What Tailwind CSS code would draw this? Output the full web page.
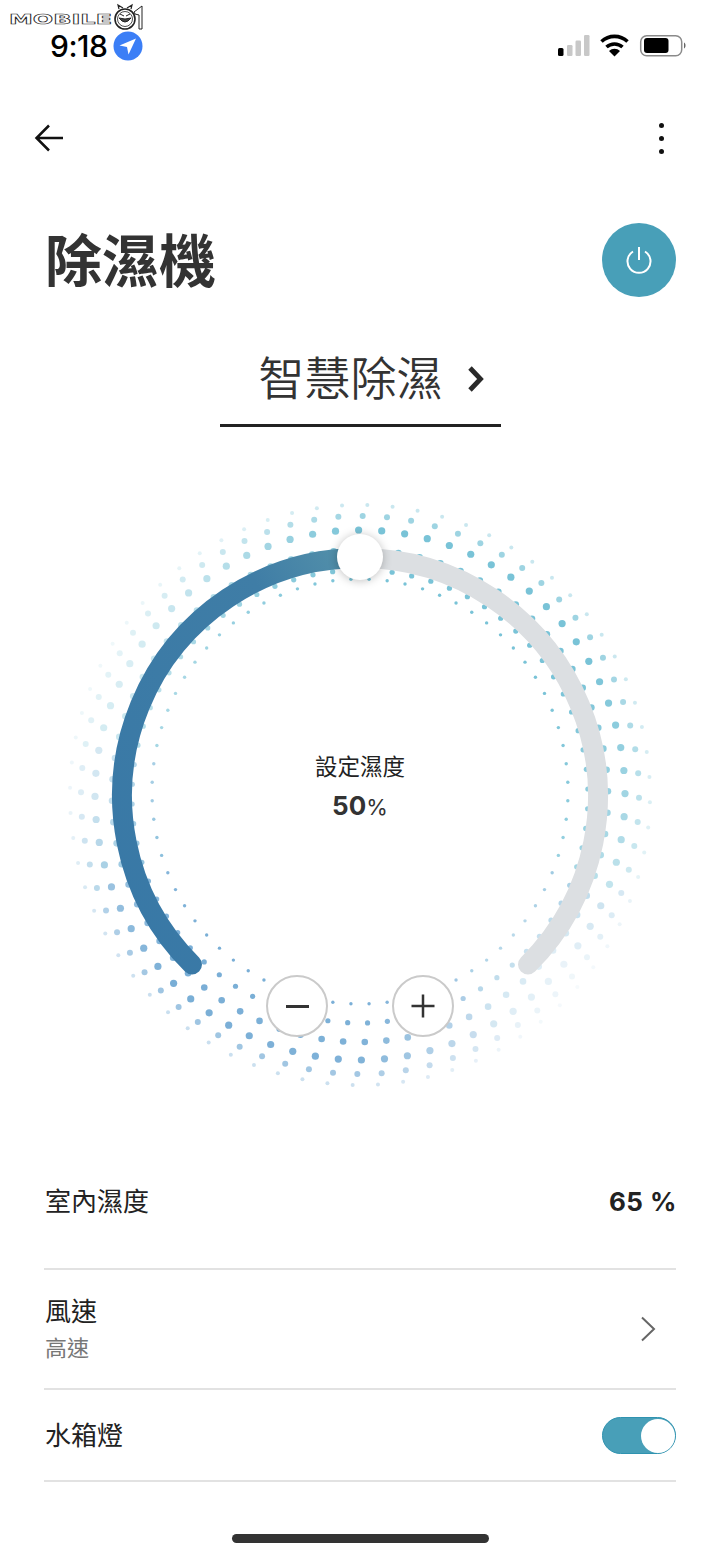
<!DOCTYPE html>
<html lang="zh-Hant">
<head>
  <meta charset="UTF-8">
  <meta name="viewport" content="width=device-width, initial-scale=1.0">
  <title>除濕機</title>
  <script src="https://cdn.jsdelivr.net/npm/@tailwindcss/browser@4"></script>
</head>
<body class="bg-white font-['Inter','Noto_Sans_CJK_TC',sans-serif]">
  <div class="relative w-[720px] h-[1558px] overflow-hidden bg-white text-[#333]">

    <!-- watermark -->
    <svg class="absolute left-0 top-0" width="150" height="34" viewBox="0 0 150 34">
      <text x="9" y="23.500" font-family="DejaVu Sans" font-weight="700" font-size="14" textLength="103" lengthAdjust="spacingAndGlyphs" fill="#fff" stroke="#222" stroke-width="0.6">MOBILE</text>
      <circle cx="125" cy="19" r="10" fill="#fff" stroke="#222" stroke-width="1.6"/>
      <circle cx="125" cy="19" r="7.500" fill="none" stroke="#222" stroke-width="0.8"/>
      <path d="M119 18q6 8 12 0q-6 2-12 0zM120 14l4 2M130 14l-4 2" fill="#444" stroke="#222" stroke-width="1"/>
      <path d="M119 9l-1-4 5 3M131 9l1-4-5 3" fill="none" stroke="#222" stroke-width="1.2"/>
      <path d="M134 12l4-3 4-3v23h-3v-14l-4-1z" fill="#fff" stroke="#222" stroke-width="1"/>
    </svg>

    <!-- status bar -->
    <div class="h-[92px] pl-[50px] pr-[34px] flex items-center">
      <span class="text-[30px] leading-none font-medium text-black tracking-[-0.5px]">9:18</span>
      <svg class="ml-[6px]" width="30" height="30" viewBox="0 0 30 30">
        <circle cx="15" cy="15" r="14.500" fill="#3b7ef6"/>
        <path d="M23 7.500 6.500 14.500 14 16 15.500 23.500z" fill="#fff"/>
      </svg>
      <svg class="ml-auto" width="132" height="30" viewBox="554 31 132 30">
        <rect x="558" y="48" width="5.500" height="8" rx="1.500" fill="#000"/>
        <rect x="567" y="45" width="5.500" height="11" rx="1.200" fill="#c8c8c8"/>
        <rect x="575.500" y="40.500" width="5.500" height="15.500" rx="1.200" fill="#c8c8c8"/>
        <rect x="584" y="35" width="5.500" height="21" rx="1.200" fill="#c8c8c8"/>
        <path d="M601.500 41.500a19 19 0 0 1 26 0" fill="none" stroke="#000" stroke-width="3.600"/>
        <path d="M606.500 47a12 12 0 0 1 16 0" fill="none" stroke="#000" stroke-width="3.600"/>
        <path d="M609 51a8 8 0 0 1 11 0l-5.500 5.500z" fill="#000"/>
        <rect x="640.700" y="35.700" width="41" height="20" rx="6" fill="none" stroke="#8a8a8a" stroke-width="1.500"/>
        <rect x="644" y="38" width="24.500" height="15" rx="3" fill="#000"/>
        <path d="M684 42.500c2 1 2 5 0 6z" fill="#666"/>
      </svg>
    </div>

    <!-- nav -->
    <div class="h-[92px] pl-[34px] pr-[56px] flex items-center justify-between">
      <svg width="30" height="28" viewBox="0 0 30 28" fill="none" stroke="#111" stroke-width="2.500">
        <path d="M29 14H3M15 1.500 2.500 14 15 26.500"/>
      </svg>
      <div class="flex flex-col gap-[8px]">
        <span class="block w-[5px] h-[5px] rounded-full bg-[#111]"></span>
        <span class="block w-[5px] h-[5px] rounded-full bg-[#111]"></span>
        <span class="block w-[5px] h-[5px] rounded-full bg-[#111]"></span>
      </div>
    </div>

    <!-- title -->
    <div class="h-[152px] pl-[45px] pr-[44px] flex items-center justify-between">
      <h1 class="text-[57px] leading-none font-bold text-[#333] pt-[2px]">除濕機</h1>
      <button class="w-[74px] h-[74px] rounded-full bg-[#489fb8] flex items-center justify-center">
        <svg width="28" height="30" viewBox="0 0 28 30" fill="none" stroke="#fff" stroke-width="2">
          <path d="M14 2v13M8 6.500a11.500 11.500 0 1 0 12 0"/>
        </svg>
      </button>
    </div>

    <!-- mode tab -->
    <div class="w-[281px] h-[91px] mx-auto border-b-[3px] border-[#222] flex items-center pl-[39px] pb-[4px]">
      <span class="text-[46px] leading-none font-[350] text-[#333]">智慧除濕</span>
      <svg class="ml-[23px] mt-[1px]" width="20" height="28" viewBox="0 0 20 28" fill="none" stroke="#2a2a2a" stroke-width="4.800">
        <path d="M4 3 14.500 14 4 25"/>
      </svg>
    </div>

    <!-- dial -->
    <div class="relative h-[708px]">
      <svg id="dial" class="absolute inset-0" width="720" height="708" viewBox="0 427 720 708">
        <defs>
          <linearGradient id="arcFill" x1="0" y1="1" x2="1" y2="0">
            <stop offset="0" stop-color="#3878a6"/>
            <stop offset="0.75" stop-color="#3f7da6"/>
            <stop offset="1" stop-color="#5592aa"/>
          </linearGradient>
        </defs>
        <g id="dots"></g>
        <path d="M360 558A238 238 0 0 1 528 964.500" fill="none" stroke="#dcdfe2" stroke-width="20" stroke-linecap="round"/>
        <path d="M192 964.500A238 238 0 0 1 360 558" fill="none" stroke="url(#arcFill)" stroke-width="20" stroke-linecap="round"/>
      </svg>

      <div class="absolute left-[337px] top-[107px] w-[46px] h-[46px] rounded-full bg-white shadow-[0_1px_10px_rgba(0,0,0,0.25)]"></div>

      <div class="absolute left-[260px] top-[324px] w-[200px] flex flex-col items-center">
        <span class="text-[22.500px] leading-[32px] text-[#222]">設定濕度</span>
        <span class="mt-[8px] leading-[30px] text-[26px] font-bold text-[#333]">50<span class="text-[22px] font-normal">%</span></span>
      </div>

      <button class="absolute left-[266px] top-[548px] w-[62px] h-[62px] rounded-full bg-white border-2 border-[#cacaca] flex items-center justify-center">
        <span class="block w-[23px] h-[3px] bg-[#333]"></span>
      </button>
      <button class="absolute left-[392px] top-[548px] w-[62px] h-[62px] rounded-full bg-white border-2 border-[#cacaca] flex items-center justify-center">
        <svg width="24" height="24" viewBox="0 0 24 24" fill="none" stroke="#333" stroke-width="2.500"><path d="M0.500 12h23M12 0.500v23"/></svg>
      </button>
    </div>

    <!-- settings list -->
    <div class="mx-[44px]">
      <div class="h-[135px] border-b-2 border-[#e2e2e2] flex items-center justify-between pt-[1px]">
        <span class="text-[26px] leading-none text-[#222] pl-[1px]">室內濕度</span>
        <span class="text-[26px] leading-none font-bold text-[#222] tracking-[0.5px] mr-[-1px]">65 %</span>
      </div>
      <div class="h-[120px] border-b-2 border-[#e2e2e2] flex items-center justify-between">
        <div class="flex flex-col pl-[1px] pt-[1px]">
          <span class="text-[26px] leading-[37px] text-[#222]">風速</span>
          <span class="text-[22px] leading-[36px] text-[#777]">高速</span>
        </div>
        <svg class="mr-[20px]" width="16" height="26" viewBox="0 0 16 26" fill="none" stroke="#666" stroke-width="2">
          <path d="M2 1.500 14 13 2 24.500"/>
        </svg>
      </div>
      <div class="h-[92px] border-b-2 border-[#e2e2e2] flex items-center justify-between">
        <span class="text-[26px] leading-none text-[#222] pl-[1px] pt-[1px]">水箱燈</span>
        <div class="w-[74px] h-[37px] mt-[1px] rounded-full bg-[#489fb8] border border-[#2f93b0] flex items-center justify-end">
          <span class="block w-[34px] h-[34px] rounded-full bg-white"></span>
        </div>
      </div>
    </div>

    <!-- home indicator -->
    <div class="mt-[52px] mx-auto w-[257px] h-[9px] rounded-full bg-[#333]"></div>
  </div>

  <script>
    // halftone ring around the dial
    const rings = [
      { rx: 208, ry: 212.5, cy: 791.5, phase: 2.5, size: 1.7, curve: 0.35, mult: 1 },
      { rx: 228, ry: 226.5, cy: 796.5, phase: 3.1, size: 2.6, curve: 0.5, mult: 1 },
      { rx: 248, ry: 246, cy: 796, phase: 3.9, size: 3.3, curve: 0.8, mult: 1 },
      { rx: 265, ry: 265, cy: 795, phase: 4.7, size: 3.6, curve: 1, mult: 1 },
      { rx: 279, ry: 279, cy: 795, phase: 0.55, size: 3, curve: 1, mult: 0.72 },
      { rx: 290, ry: 290, cy: 795, phase: 1.45, size: 2, curve: 1, mult: 0.4 }
    ];
    const fade = [[0, 1], [60, 1], [90, 0.7], [110, 0.45], [130, 0.16], [145, 0.24], [165, 0.6], [180, 0.95], [225, 1], [250, 0.75], [270, 0.35], [300, 0.28], [330, 0.55], [350, 0.85], [360, 1]];

    function lookup(deg) {
      for (let i = 1; i < fade.length; i++) {
        if (deg <= fade[i][0]) {
          const [a, va] = fade[i - 1];
          const [b, vb] = fade[i];
          return va + (vb - va) * (deg - a) / (b - a);
        }
      }
      return 1;
    }

    function dotColor(deg) {
      if (deg < 110 || deg > 280) return "#79c3d7";
      if (deg < 150 || deg > 250) return "#7db8d8";
      return "#79aed6";
    }

    const group = document.getElementById("dots");
    rings.forEach(ring => {
      for (let i = 0; i < 72; i++) {
        const deg = (ring.phase + i * 5) % 360;
        const rad = deg * Math.PI / 180;
        const dot = document.createElementNS("http://www.w3.org/2000/svg", "circle");
        dot.setAttribute("cx", 360 + ring.rx * Math.sin(rad));
        dot.setAttribute("cy", ring.cy - ring.ry * Math.cos(rad));
        dot.setAttribute("r", ring.size);
        dot.setAttribute("fill", dotColor(deg));
        dot.setAttribute("opacity", Math.pow(lookup(deg), ring.curve) * ring.mult);
        group.appendChild(dot);
      }
    });
  </script>
</body>
</html>
